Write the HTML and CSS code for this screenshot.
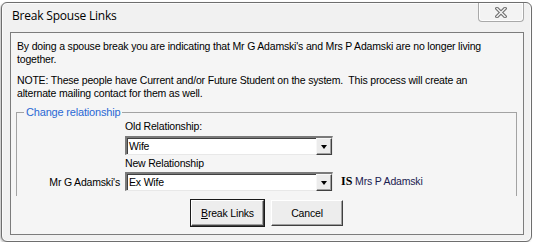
FILE: index.html
```html
<!DOCTYPE html>
<html>
<head>
<meta charset="utf-8">
<link rel="stylesheet" href="styles.css">
</head>
<body>
<div class="window">
  <div class="titlebar">
    <span class="title">Break Spouse Links</span>
    <div class="close">
      <svg width="12" height="11" viewBox="0 0 12 11">
        <path d="M2 1.5 L10 9.5 M10 1.5 L2 9.5" stroke="#6f6f6f" stroke-width="3.6" stroke-linecap="square" fill="none"/>
        <path d="M2 1.5 L10 9.5 M10 1.5 L2 9.5" stroke="#f4f4f4" stroke-width="1.4" stroke-linecap="square" fill="none"/>
      </svg>
    </div>
  </div>
  <div class="panel">
    <p class="msg">By doing a spouse break you are indicating that Mr G Adamski's and Mrs P Adamski are no longer living together.</p>
    <p class="msg note">NOTE: These people have Current and/or Future Student on the system.&nbsp; This process will create an alternate mailing contact for them as well.</p>
    <fieldset class="group">
      <legend class="legend">Change relationship</legend>
      <div class="grid">
        <div class="cap cap-old">Old Relationship:</div>
        <div class="combo combo-old"><span class="combo-text">Wife</span><span class="drop"><span class="tri"></span></span></div>
        <div class="cap cap-new">New Relationship</div>
        <div class="who">Mr G Adamski's</div>
        <div class="combo combo-new"><span class="combo-text">Ex Wife</span><span class="drop"><span class="tri"></span></span></div>
        <div class="is"><b class="is-b">IS</b> Mrs P Adamski</div>
      </div>
    </fieldset>
    <div class="buttons">
      <div class="btn btn-default"><span class="acc">B</span>reak Links</div>
      <div class="btn">Cancel</div>
    </div>
  </div>
</div>
</body>
</html>
```
FILE: styles.css
```css
html, body {
  margin: 0;
  padding: 0;
  background: #ffffff;
}
body {
  font-family: "Liberation Sans", Arial, sans-serif;
  font-size: 10.5px;
  letter-spacing: -0.18px;
  color: #000;
}
.window {
  margin: 2px 1px 0 1px;
  width: 529px;
  height: 238px;
  border: 1px solid #6e6e6e;
  border-radius: 6px;
  background: #f1f1f1;
  box-shadow: inset 0 0 0 1px #fbfbfb, -1px 1px 2px rgba(0,0,0,0.25);
  display: flex;
  flex-direction: column;
}
.titlebar {
  height: 28px;
  display: flex;
  align-items: flex-start;
  justify-content: space-between;
  flex-shrink: 0;
}
.title {
  font-family: "Open Sans", "Liberation Sans", sans-serif;
  font-size: 12px;
  letter-spacing: -0.2px;
  line-height: 16px;
  margin: 5px 0 0 10px;
  color: #000;
}
.close {
  width: 44px;
  height: 18px;
  margin: 0 7px 0 0;
  border: 1px solid #a9a9a9;
  border-top: none;
  border-radius: 0 0 4px 4px;
  background: #f3f3f3;
  display: flex;
  align-items: center;
  justify-content: center;
  box-shadow: inset 0 0 0 1px #fdfdfd;
}
.close svg { display: block; margin-top: 1px; }
.panel {
  margin: 1px 0 0 8px;
  width: 512px;
  height: 201px;
  border: 1px solid #7c7c7c;
  background: #f5f5f5;
  display: flex;
  flex-direction: column;
}
.msg {
  margin: 7px 22px 0 6px;
  line-height: 13px;
}
.note {
  margin-top: 8px;
}
.group {
  margin: 6px 6px 0 5px;
  padding: 0 0 5px 0;
  border: 1px solid #a3a3a3;
  border-bottom: none;
  min-width: 0;
}
.legend {
  color: #2a68d4;
  padding: 0 2px;
  margin-left: 7px;
  line-height: 13px;
  font-size: 11px;
}
.grid {
  display: grid;
  grid-template-columns: 103px 208px auto;
  column-gap: 5px;
  align-items: center;
}
.cap {
  grid-column: 2;
  line-height: 13px;
}
.cap-old { margin-top: 1px; }
.cap-new { margin-top: 2px; }
.combo-old { grid-column: 2; margin-top: 3px; }
.combo-new { grid-column: 2; margin-top: 2px; }
.who {
  grid-column: 1;
  grid-row: 4;
  text-align: right;
  margin-top: 2px;
}
.combo-new { grid-row: 4; }
.is {
  grid-column: 3;
  grid-row: 4;
  margin-top: 2px;
  margin-left: 3px;
  color: #1a2050;
}
.is-b {
  font-family: "Liberation Serif", serif;
  font-weight: bold;
  font-size: 12px;
  letter-spacing: 0;
  color: #000;
}
.combo {
  height: 16px;
  border-style: solid;
  border-width: 2px 1px 1px 2px;
  border-color: #7a7a7a #e8e8e8 #e8e8e8 #7a7a7a;
  box-shadow: inset 1px 1px 0 #404040;
  background: #fff;
  display: flex;
  align-items: center;
  justify-content: space-between;
}
.combo-text {
  padding-left: 2px;
  line-height: 13px;
}
.drop {
  width: 14px;
  height: 15px;
  margin-top: 1px;
  border-style: solid;
  border-width: 1px;
  border-color: #f7f7f7 #404040 #404040 #f7f7f7;
  box-shadow: inset -1px -1px 0 #a0a0a0;
  background: #ececec;
  display: flex;
  align-items: center;
  justify-content: center;
}
.tri {
  width: 0;
  height: 0;
  border-left: 3.5px solid transparent;
  border-right: 3.5px solid transparent;
  border-top: 4px solid #000;
  margin-top: 1px;
}
.buttons {
  display: flex;
  justify-content: center;
  gap: 7px;
  margin-top: 4px;
}
.btn {
  width: 70px;
  height: 24px;
  border: 1px solid;
  border-color: #ffffff #404040 #404040 #ffffff;
  box-shadow: inset -1px -1px 0 #a0a0a0;
  background: #ededed;
  display: flex;
  align-items: center;
  justify-content: center;
  line-height: 13px;
}
.btn-default {
  width: 71px;
  outline: 1px solid #1a1a1a;
  outline-offset: 0;
  border-color: #ffffff #404040 #404040 #ffffff;
}
.acc { text-decoration: underline; }
```
